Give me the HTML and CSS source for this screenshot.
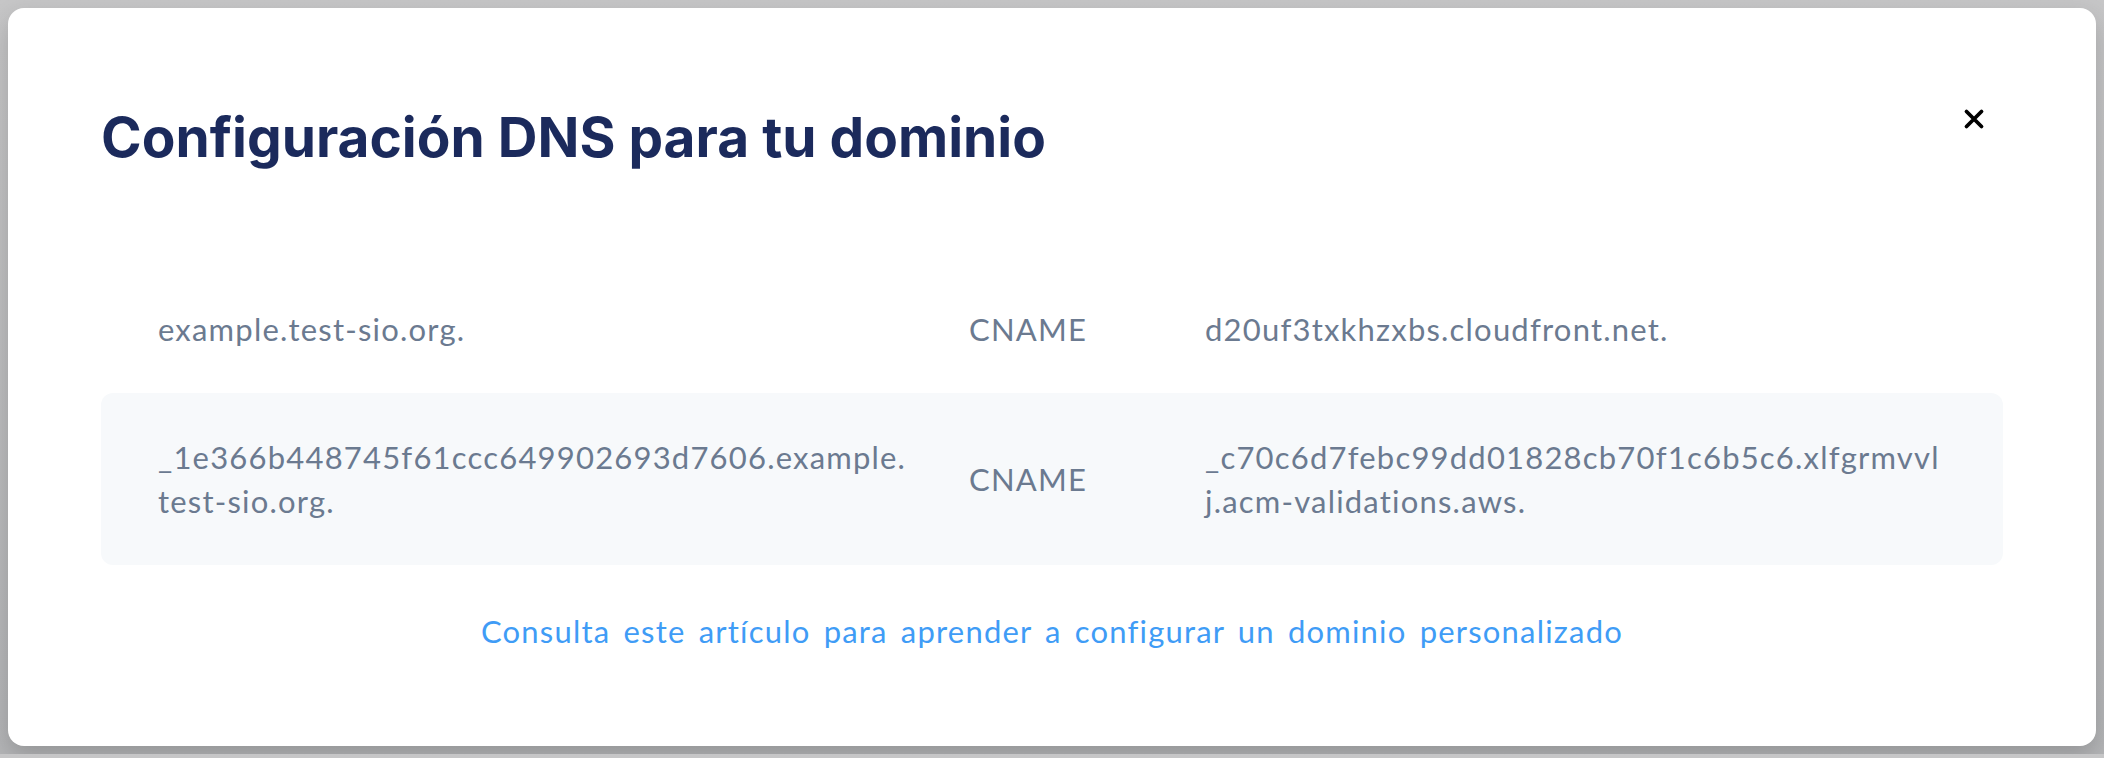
FILE: index.html
```html
<!DOCTYPE html>
<html>
<head>
   <meta charset="UTF-8">
   <title>Configuración DNS</title>
   <link rel="stylesheet" href="styles.css">
</head>
<body>
   <div class="modal">
      <div class="modal-head">
         <h1>Configuración DNS para tu dominio</h1>
         <button class="close" type="button" aria-label="Cerrar">
            <svg width="22" height="22" viewBox="0 0 22 22">
               <path d="M3.5 3.5 L18.5 18.5 M18.5 3.5 L3.5 18.5" stroke="#000" stroke-width="3.8" stroke-linecap="round" fill="none"/>
            </svg>
         </button>
      </div>

      <div class="records">
         <div class="record">
            <span class="host">example.test-sio.org.</span>
            <span class="type">CNAME</span>
            <span class="value">d20uf3txkhzxbs.cloudfront.net.</span>
         </div>
         <div class="record">
            <span class="host">_1e366b448745f61ccc649902693d7606.example.<wbr>test-sio.org.</span>
            <span class="type">CNAME</span>
            <span class="value">_c70c6d7febc99dd01828cb70f1c6b5c6.xlfgrmvvl<wbr>j.acm-validations.aws.</span>
         </div>
      </div>

      <p class="help"><a href="#">Consulta este artículo para aprender a configurar un dominio personalizado</a></p>
   </div>
</body>
</html>
```

FILE: styles.css
```css
      body {
         margin: 0;
         background: linear-gradient(#c6c6c7, #b4b5b7);
         font-family: Lato, "Noto Sans", sans-serif;
      }
      .modal {
         margin: 8px;
         padding: 87px 93px 94px 93px;
         background: white;
         border-radius: 16px;
         box-shadow: 0 10px 24px rgba(0, 0, 0, 0.18);
      }
      .modal-head {
         display: flex;
         justify-content: space-between;
         align-items: flex-start;
      }
      h1 {
         margin: 10px 0 0 0;
         font-family: Inter, "Liberation Sans", sans-serif;
         font-size: 55px;
         line-height: 65px;
         font-weight: 700;
         color: #1b2a5c;
      }
      .close {
         width: 48px;
         height: 48px;
         margin-right: 5px;
         padding: 0;
         border: none;
         background: none;
         display: flex;
         align-items: center;
         justify-content: center;
         cursor: pointer;
      }
      .records {
         margin-top: 95px;
      }
      .record {
         display: grid;
         grid-template-columns: 790px 215px 1fr;
         column-gap: 21px;
         align-items: center;
         padding: 42px 40px 42px 57px;
         border-radius: 12px;
         font-size: 31px;
         line-height: 44px;
         letter-spacing: 1.2px;
         color: #6b7a90;
      }
      .record:nth-child(even) {
         background: #f7f9fb;
      }
      .host,
      .value {
         overflow-wrap: anywhere;
      }
      .help {
         margin: 45px 0 0 0;
         text-align: center;
         font-size: 31px;
         line-height: 42px;
         letter-spacing: 1.2px;
         word-spacing: 4px;
      }
      .help a {
         color: #3f9cf6;
         text-decoration: none;
      }
```
